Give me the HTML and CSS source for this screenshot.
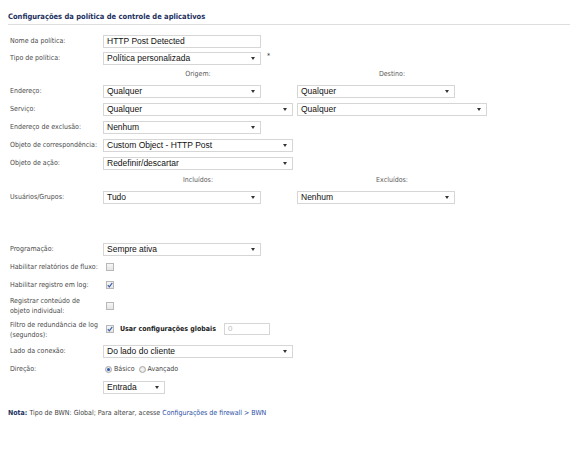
FILE: index.html
```html
<!DOCTYPE html>
<html lang="pt">
<head>
<meta charset="utf-8">
<title>Configurações da política de controle de aplicativos</title>
<link rel="stylesheet" href="styles.css">
</head>
<body>
<div class="page">
  <div class="title">Configurações da política de controle de aplicativos</div>
  <div class="form">
    <div class="row r-nome">
      <div class="lbl">Nome da política:</div>
      <div class="text w158">HTTP Post Detected</div>
    </div>
    <div class="row r-tipo">
      <div class="lbl">Tipo de política:</div>
      <div class="select w158"><span>Política personalizada</span><i class="arr"></i></div>
      <span class="ast">*</span>
    </div>
    <div class="row hdr">
      <div class="lbl"></div>
      <div class="hcell">Origem:</div>
      <div class="hcell">Destino:</div>
    </div>
    <div class="row">
      <div class="lbl">Endereço:</div>
      <div class="col"><div class="select w158"><span>Qualquer</span><i class="arr"></i></div></div>
      <div class="select w158"><span>Qualquer</span><i class="arr"></i></div>
    </div>
    <div class="row">
      <div class="lbl">Serviço:</div>
      <div class="col"><div class="select w190"><span>Qualquer</span><i class="arr"></i></div></div>
      <div class="select w190"><span>Qualquer</span><i class="arr"></i></div>
    </div>
    <div class="row">
      <div class="lbl">Endereço de exclusão:</div>
      <div class="select w158"><span>Nenhum</span><i class="arr"></i></div>
    </div>
    <div class="row">
      <div class="lbl">Objeto de correspondência:</div>
      <div class="select w190"><span>Custom Object - HTTP Post</span><i class="arr"></i></div>
    </div>
    <div class="row">
      <div class="lbl">Objeto de ação:</div>
      <div class="select w190"><span>Redefinir/descartar</span><i class="arr"></i></div>
    </div>
    <div class="row hdr">
      <div class="lbl"></div>
      <div class="hcell">Incluídos:</div>
      <div class="hcell">Excluídos:</div>
    </div>
    <div class="row">
      <div class="lbl">Usuários/Grupos:</div>
      <div class="col"><div class="select w158"><span>Tudo</span><i class="arr"></i></div></div>
      <div class="select w158"><span>Nenhum</span><i class="arr"></i></div>
    </div>
    <div class="row r-prog">
      <div class="lbl">Programação:</div>
      <div class="select w158"><span>Sempre ativa</span><i class="arr"></i></div>
    </div>
    <div class="row">
      <div class="lbl">Habilitar relatórios de fluxo:</div>
      <span class="cb"></span>
    </div>
    <div class="row">
      <div class="lbl">Habilitar registro em log:</div>
      <span class="cb"><svg viewBox="0 0 8 8" width="8" height="8"><path d="M1.8 4.2 L3.3 5.8 L6.3 1.9" fill="none" stroke="#3a5ba8" stroke-width="1.1"/></svg></span>
    </div>
    <div class="row tall">
      <div class="lbl two">Registrar conteúdo de objeto individual:</div>
      <span class="cb"></span>
    </div>
    <div class="row tall">
      <div class="lbl two">Filtro de redundância de log (segundos):</div>
      <div class="filt">
        <span class="cb"><svg viewBox="0 0 8 8" width="8" height="8"><path d="M1.8 4.2 L3.3 5.8 L6.3 1.9" fill="none" stroke="#3a5ba8" stroke-width="1.1"/></svg></span>
        <span class="glob">Usar configurações globais</span>
        <div class="num">0</div>
      </div>
    </div>
    <div class="row">
      <div class="lbl">Lado da conexão:</div>
      <div class="select w190"><span>Do lado do cliente</span><i class="arr"></i></div>
    </div>
    <div class="row">
      <div class="lbl">Direção:</div>
      <div class="radios">
        <span class="rd on"></span><span class="rtxt">Básico</span>
        <span class="rd"></span><span class="rtxt">Avançado</span>
      </div>
    </div>
    <div class="row">
      <div class="lbl"></div>
      <div class="select w62"><span>Entrada</span><i class="arr"></i></div>
    </div>
  </div>
  <p class="note"><b>Nota:</b> Tipo de BWN: Global; Para alterar, acesse <a href="#">Configurações de firewall &gt; BWN</a></p>
</div>
</body>
</html>
```

FILE: styles.css
```css
* { box-sizing: border-box; }
body {
  margin: 0;
  background: #ffffff;
  font-family: "DejaVu Sans Condensed", "DejaVu Sans", sans-serif;
  font-size: 7px;
  color: #4a4a4a;
}
.title {
  margin: 12px 6px 0 8px;
  padding-bottom: 2px;
  border-bottom: 1px solid #dedede;
  font-weight: bold;
  font-size: 7.5px;
  line-height: 10px;
  color: #1c3160;
}
.form {
  padding: 7px 0 0 10px;
}
.row {
  display: flex;
  align-items: center;
  height: 18px;
}
.r-tipo { height: 16px; }
.hdr { height: 16px; }
.r-prog { margin-top: 34px; }
.tall { height: 24px; }
.lbl {
  width: 93px;
  flex: none;
  line-height: 10px;
}
.lbl.two { width: 90px; margin-right: 3px; }
.col { width: 194px; flex: none; }
.hcell {
  width: 190px;
  margin-right: 4px;
  text-align: center;
  color: #5a5a5a;
}
.text, .select, .num {
  height: 13px;
  border: 1px solid #d6d6d6;
  background: #fff;
  font-family: "Liberation Sans", Arial, sans-serif;
  font-size: 8.5px;
  color: #111;
  display: flex;
  align-items: center;
  padding-left: 3px;
}
.select {
  justify-content: space-between;
  padding-right: 5px;
}
.arr {
  width: 0;
  height: 0;
  border-left: 2.5px solid transparent;
  border-right: 2.5px solid transparent;
  border-top: 3px solid #333;
  margin-top: 1px;
}
.w158 { width: 158px; }
.w190 { width: 190px; }
.w62 { width: 62px; }
.ast {
  margin-left: 6px;
  margin-top: -4px;
  color: #333;
  font-size: 7px;
}
.cb {
  width: 8px;
  height: 8px;
  margin-left: 3px;
  border: 1px solid #b8b8b8;
  background: linear-gradient(#f6f6f6, #e4e4e4);
  display: flex;
  align-items: center;
  justify-content: center;
  flex: none;
}
.cb svg { display: block; margin: -1px; }
.filt {
  display: flex;
  align-items: center;
  margin-top: -3px;
}
.glob {
  margin-left: 6px;
  font-weight: bold;
  color: #222;
}
.num {
  width: 46px;
  height: 12px;
  margin-left: 8px;
  font-size: 8px;
  color: #bbb;
}
.radios {
  display: flex;
  align-items: center;
  margin-left: 2px;
}
.rd {
  width: 7px;
  height: 7px;
  border-radius: 50%;
  border: 1px solid #a6a6a6;
  background: radial-gradient(#fafafa, #dcdcdc);
  display: flex;
  align-items: center;
  justify-content: center;
  flex: none;
}
.rd.on::after {
  content: "";
  width: 3px;
  height: 3px;
  border-radius: 50%;
  background: #2c55b0;
}
.rtxt {
  margin: 0 4px 0 2px;
  color: #444;
}
.note {
  margin: 8px 0 0 8px;
  line-height: 18px;
  font-size: 7px;
  color: #444;
}
.note b { color: #1c3160; }
.note a { color: #2b4fa5; text-decoration: none; }
```
